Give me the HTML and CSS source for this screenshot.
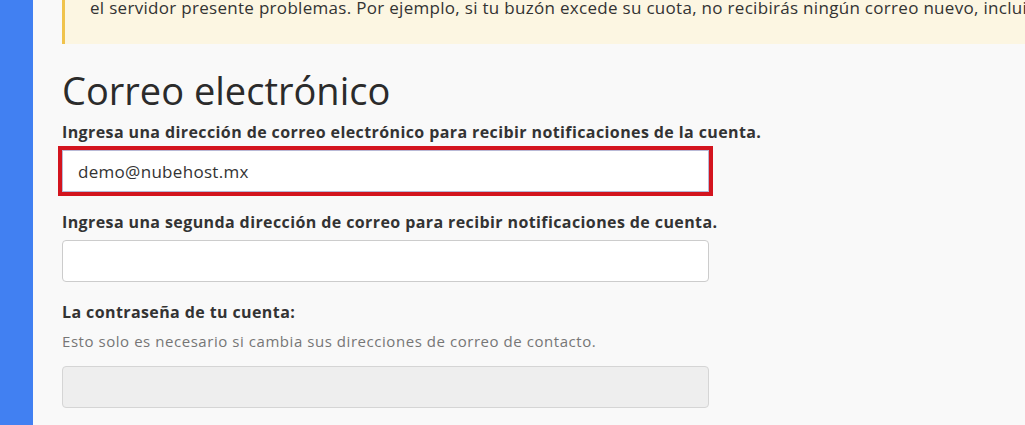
FILE: index.html
```html
<!DOCTYPE html>
<html>
<head>
    <meta charset="utf-8" />
    <title>Información de contacto</title>
    <link rel="stylesheet" href="styles.css">
</head>
<body>
    <div class="layout">
        <aside class="sidebar"></aside>

        <main class="content">
            <div class="alert">
                el servidor presente problemas. Por ejemplo, si tu buzón excede su cuota, no recibirás ningún correo nuevo, incluidas las notificaciones.
            </div>

            <h1 class="page-title">Correo electrónico</h1>

            <div class="form-group">
                <label class="field-label" for="email1">Ingresa una dirección de correo electrónico para recibir notificaciones de la cuenta.</label>
                <input class="form-control is-focused" id="email1" type="text" value="demo@nubehost.mx">
            </div>

            <div class="form-group">
                <label class="field-label" for="email2">Ingresa una segunda dirección de correo para recibir notificaciones de cuenta.</label>
                <input class="form-control" id="email2" type="text" value="">
            </div>

            <div class="form-group">
                <label class="field-label" for="password">La contraseña de tu cuenta:</label>
                <div class="help-text">Esto solo es necesario si cambia sus direcciones de correo de contacto.</div>
                <input class="form-control" id="password" type="password" disabled>
            </div>
        </main>
    </div>
</body>
</html>
```

FILE: styles.css
```css
body {
    margin: 0;
    padding: 0;
    background: #f9f9f9;
    font-family: "Open Sans", Arial, sans-serif;
    color: #333;
    overflow: hidden;
}

.layout {
    display: flex;
    height: 100vh;
}

.sidebar {
    flex: 0 0 33px;
    background: #4180f2;
}

.content {
    flex: 1;
    min-width: 0;
    padding-left: 29px;
    overflow: hidden;
}

.alert {
    margin: -4px -200px 0 0;
    padding: 0 0 24px 25px;
    background: #fcf6e2;
    border-left: 3px solid #f0c34c;
    font-size: 17px;
    letter-spacing: 0.3px;
    line-height: 24px;
    white-space: nowrap;
}

.page-title {
    margin: 22px 0 7px;
    font-size: 38px;
    font-weight: 400;
    line-height: 48px;
    color: #2b2b2b;
}

.form-group {
    width: 647px;
    margin-bottom: 19px;
}

.field-label {
    display: block;
    margin-bottom: 7px;
    font-size: 16px;
    font-weight: 700;
    letter-spacing: 0.4px;
    line-height: 22px;
    color: #333;
    white-space: nowrap;
}

.help-text {
    margin: 8px 0 15px;
    font-size: 15px;
    letter-spacing: 0.55px;
    line-height: 20px;
    color: #767676;
    white-space: nowrap;
}

.form-control {
    display: block;
    box-sizing: border-box;
    width: 100%;
    height: 42px;
    padding: 0 15px;
    border: 1px solid #ccc;
    border-radius: 4px;
    background: #fff;
    font-family: inherit;
    font-size: 17px;
    letter-spacing: 0.3px;
    color: #333;
}

.form-control.is-focused {
    border-color: #b9b9d6;
    outline: 4px solid #d3141e;
    border-radius: 0;
}

.form-control:disabled {
    background: #eee;
    border-color: #d5d5d5;
}
```
